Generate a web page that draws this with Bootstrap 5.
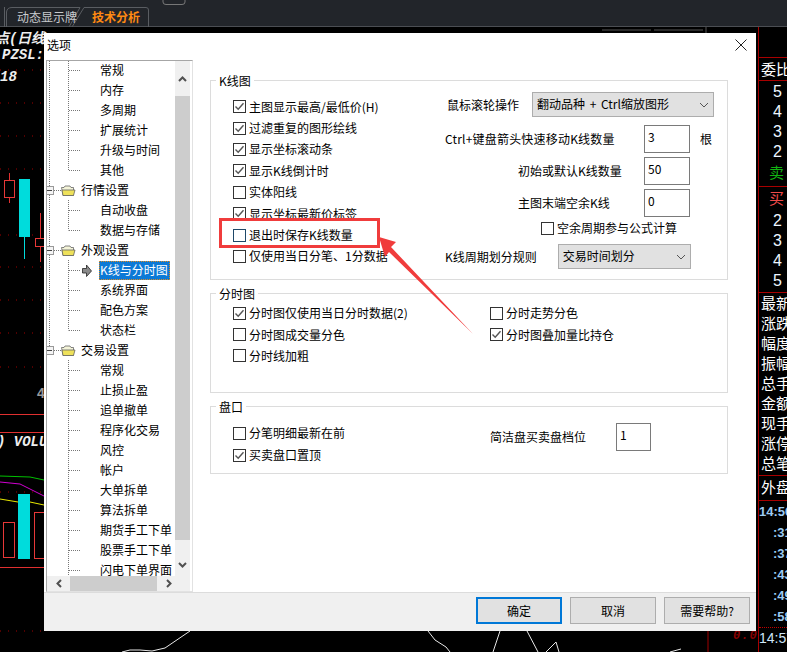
<!DOCTYPE html>
<html lang="zh-CN">
<head>
<meta charset="utf-8">
<title>选项</title>
<link rel="stylesheet" href="https://cdn.jsdelivr.net/npm/bootstrap@5.3.0/dist/css/bootstrap.min.css">
<style>
html,body{margin:0;background:#000;}
body{width:787px;height:652px;overflow:hidden;position:relative;font-family:"Noto Sans CJK SC","Noto Sans",sans-serif;font-size:12px;line-height:14px;color:#000;}
.screen{width:787px;height:652px;background:#000;}
.topbar{height:27px;background:#22252a;position:relative;border-bottom:1px solid #4b4e53;}
.tabs-art{position:absolute;left:0;top:0;}
.tabx{position:absolute;top:9px;line-height:16px;font-size:12px;}
.tabx-a{left:17px;color:#c9cbce;}
.tabx-b{left:92px;color:#ff8a12;font-weight:700;}
.chartwrap{width:758px;height:625px;}
.chartwrap svg{display:block;}
.ital{font-family:"Liberation Mono",monospace;font-style:italic;font-weight:700;font-size:14px;fill:#eee;}
.side{width:29px;height:625px;border-left:1px solid #a80000;overflow:hidden;color:#fff;white-space:nowrap;}
.s-head{height:31px;border-bottom:1px solid #a80000;}
.s-bid{height:23px;border-bottom:1px solid #a80000;font-size:15px;line-height:22px;padding-left:2px;}
.s-five{height:106px;border-bottom:1px solid #a80000;padding-top:1px;}
.s-five2{height:106px;border-bottom:1px solid #a80000;padding-top:1px;}
.s-d{height:20px;line-height:20px;font-family:"Liberation Sans",sans-serif;font-size:16px;padding-left:14px;color:#eef6ff;}
.s-d.mb3x{margin-bottom:3px;}
.s-sell{color:#12b312;font-family:"Noto Sans CJK SC",sans-serif;font-size:15px;padding-left:10px;}
.s-buy{color:#f04a4a;font-family:"Noto Sans CJK SC",sans-serif;font-size:15px;padding-left:10px;}
.s-lbls{height:183px;border-bottom:1px solid #a80000;font-size:15px;}
.s-l{height:20px;line-height:20px;padding-left:2px;}
.s-out{height:25px;border-bottom:1px solid #a80000;font-size:15px;line-height:22px;padding-left:2px;}
.s-t{height:21px;line-height:21px;font-family:"Liberation Sans",sans-serif;font-weight:700;font-size:13px;color:#9ccbf2;padding-left:14px;}
.s-t.whole{padding-left:0;}
.s-t.dotline{border-top:1px dotted #c00000;color:#cfe6fa;font-weight:400;font-size:14px;}
.dlg{position:absolute;left:44px;top:33px;width:712px;height:598px;background:#fff;display:flex;flex-direction:column;}
.dlg-title{height:27px;padding:0 0 3px 3px;line-height:24px;flex:none;}
.dlg-close{width:12px;height:12px;margin-right:9px;display:block;}
.dlg-body{height:532px;flex:none;}
.leftpane{width:151px;flex:none;background:#fff;}
.treebox{width:147px;height:532px;margin-left:2px;border:1px solid #e2e2e2;border-top:1px solid #a6a6a6;border-left:1px solid #a6a6a6;}
.treeinner{width:128px;height:515px;overflow:hidden;position:relative;flex:none;}
.treelines{position:absolute;left:0;top:0;}
.tr-root,.tr-kid{height:20px;line-height:20px;white-space:nowrap;position:relative;}
.tr-list{margin-top:-1px;}
.tr-root{padding-left:34px;}
.tr-kid{padding-left:53px;}
.tr-sel{display:inline-block;height:19px;line-height:17px;margin-left:-1px;padding:0 2px 0 1px;background:#0c79d6;color:#fff;outline:1px dotted #e08a1e;outline-offset:-1px;vertical-align:top;margin-top:1px;}
.vbar{width:15px;height:515px;background:#f0f0f0;flex:none;}
.vbar-btn{height:35px;}
.vbar-end{height:36px;}
.vbar-thumb{height:444px;background:#cdcdcd;}
.hbar{height:15px;width:143px;background:#f0f0f0;}
.hbar-btn{width:23px;flex:none;}
.hbar-thumb{width:87px;flex:none;height:15px;background:#cdcdcd;}
.rightpane{flex:1 1 auto;padding:20px 28px 0 15px;background:#fff;}
.grp{border:1px solid #dcdcdc;position:relative;}
.grp-1{height:200px;}
.grp-2{height:100px;margin-top:13px;}
.grp-3{height:68px;margin-top:13px;}
.grp-cap{display:table;background:#fff;margin:-7px 0 0 5px;padding:0 3px;height:14px;line-height:14px;}
.ckcol{padding-left:22px;flex:none;}
.col1w{width:234px;padding-top:8px;}
.col2w{width:257px;}
.ckrow{height:21.4px;display:flex;align-items:center;gap:3px;white-space:nowrap;}
.ckbox.form-check-input{width:13px;height:13px;margin:0;border:1px solid #333;border-radius:0;flex:none;background-color:#fff;background-size:13px 13px;box-shadow:none;float:none;}
.ckbox.form-check-input:checked{background-color:#fff;border-color:#333;background-image:url("data:image/svg+xml,%3csvg xmlns='http://www.w3.org/2000/svg' viewBox='0 0 13 13'%3e%3cpath fill='none' stroke='%23555' stroke-width='1.4' d='M2.5 6.5 5.2 9.2 10.5 3.2'/%3e%3c/svg%3e");}
.ckbox.hot{border-color:#1f4868;}
.g1right{width:270px;flex:none;margin-top:4px;}
.r-a{height:25px;margin-bottom:8px;}
.lblx{white-space:nowrap;}
.lbl-first{padding-left:2px;}
.ctlsel.form-select{font-size:12px;line-height:14px;height:25px;min-height:0;padding:0 0 2px 4px;border:1px solid #adadad;border-radius:0;background-color:#e1e1e1;color:#000;box-shadow:none;background-size:10px 6px;background-position:right 4px center;background-image:url("data:image/svg+xml,%3csvg xmlns='http://www.w3.org/2000/svg' viewBox='0 0 10 6'%3e%3cpath fill='none' stroke='%23555' d='M1 1 5 5 9 1'/%3e%3c/svg%3e");}
.sel-wide{width:182px;margin-left:13px;word-spacing:2px;}
.sel-narrow{width:133px;margin-left:21px;}
.ctlnum.form-control{width:46px;height:28px;min-height:0;font-size:12px;line-height:14px;border:1px solid #7a7a7a;border-radius:0;padding:0 3px 5px;box-shadow:none;color:#000;}
.r-n{height:28px;margin-bottom:4px;}
.lbl-pad{width:73px;flex:none;}
.lbl-w{width:126px;flex:none;white-space:nowrap;}
.lbl-w0{width:199px;flex:none;white-space:nowrap;letter-spacing:.2px;}
.gen{margin-left:10px;}
.r-ck{height:18px;padding-left:96px;margin:-2px 0 7px;}
.g2body{padding-top:1.500px;}
.g3body{padding-top:8px;}
.g3body .ckrow{height:22px;}
.g3r{align-self:flex-start;margin-top:1px;}
.g3lbl{width:126px;flex:none;}
.ctlnum.w35{width:35px;}
.dlg-foot{height:39px;flex:none;background:#f0f0f0;border-top:1px solid #dcdcdc;padding:4px 6px 0 0;}
.bt-x.btn{width:86px;height:27px;padding:0;font-size:12px;line-height:14px;border-radius:0;background:#e1e1e1;border:1px solid #adadad;color:#000;}
.bt-x.bt-pri.btn{border:2px solid #0078d7;}
.redbox{position:absolute;left:219px;top:218px;width:161px;height:30px;border:3px solid #f03c3c;}
.redarrow{position:absolute;left:370px;top:230px;}
</style>
</head>
<body>
<div class="screen d-flex flex-column">
  <div class="topbar">
    <svg class="tabs-art" width="300" height="27" fill="none" stroke="#5a5d62">
      <path d="M4.500 7V27"/>
      <path d="M6.500 27V12Q7 7.500 12 7.500H80L69 27"/>
      <path d="M72 27 84 7.500H146Q148.500 7.500 148.500 10V27"/>
      <path d="M163 0V2Q163 4.500 166 4.500H182Q185 4.500 185 2V0" stroke="#777"/>
    </svg>
    <span class="tabx tabx-a">动态显示牌</span>
    <span class="tabx tabx-b">技术分析</span>
  </div>
  <div class="d-flex">
    <div class="chartwrap">
      <svg width="758" height="625" viewBox="0 27 758 625">
        <rect x="0" y="27" width="758" height="625" fill="#000"/>
        <g stroke="#a00000" stroke-dasharray="1 7" fill="none">
          <path d="M0 70H44M0 103H44M0 136H44M0 169H44M0 235H44M0 267H44M0 300H44M0 333H44M0 367H44M0 492H44M0 631H44"/>
        </g>
        <text class="ital" x="-5" y="43">点(日线</text>
        <text class="ital" x="2" y="59">PZSL:</text>
        <text class="ital" x="0" y="81">18</text>
        <text class="ital" x="-3" y="446">) VOLU</text>
        <text x="37" y="398" font-family="Liberation Sans" font-weight="700" font-size="14" fill="#999">4</text>
        <path d="M9.500 173V203M40.500 213V262M0 414.500H44M0 432.500H44M0 567.500H44" stroke="#e03030" fill="none"/>
        <rect x="4.500" y="180.500" width="10" height="17" fill="#000" stroke="#e83838"/>
        <rect x="35.500" y="238.500" width="10" height="8" fill="#000" stroke="#e83838"/>
        <rect x="19" y="179" width="11" height="58" fill="#00dcdc"/>
        <path d="M24.500 237V259" stroke="#00dcdc"/>
        <polyline points="0,476 30,477 44,480" fill="none" stroke="#00c000"/>
        <polyline points="0,482 20,484 32,490 44,496" fill="none" stroke="#d000d0"/>
        <polyline points="0,499 18,502 30,502 44,505" fill="none" stroke="#e8e800"/>
        <rect x="3.500" y="522.500" width="11" height="35" fill="#000" stroke="#e83838"/>
        <rect x="18" y="494" width="12" height="65" fill="#00dcdc"/>
        <rect x="34.500" y="512.500" width="11" height="46" fill="#000" stroke="#e83838"/>
        <g fill="none" stroke="#e8e8e8">
          <polyline points="190,631 165,648 152,651 140,650 130,650 122,652"/>
          <polyline points="428,631 435,640 446,647 450,652"/>
          <polyline points="500,631 493,652"/>
          <polyline points="527,631 538,652"/>
          <polyline points="546,652 556,642 559,652"/>
          <polyline points="670,652 681,649"/>
        </g>
        <path d="M708 631V652" stroke="#a00000"/>
        <text x="733" y="639" font-family="Liberation Mono" font-style="italic" font-weight="700" font-size="12" letter-spacing="1" fill="#8a0000">0.0</text>
        <path d="M602 30H651M654 30H703M706 27V33" stroke="#555" fill="none"/>
      </svg>
    </div>
    <div class="side">
      <div class="s-head"></div>
      <div class="s-bid">委比</div>
      <div class="s-five">
        <div class="s-d">5</div><div class="s-d">4</div><div class="s-d">3</div><div class="s-d">2</div><div class="s-d s-sell">卖</div>
      </div>
      <div class="s-five2">
        <div class="s-d s-buy mb3x">买</div><div class="s-d">2</div><div class="s-d">3</div><div class="s-d">4</div><div class="s-d">5</div>
      </div>
      <div class="s-lbls">
        <div class="s-l">最新</div><div class="s-l">涨跌</div><div class="s-l">幅度</div><div class="s-l">振幅</div><div class="s-l">总手</div><div class="s-l">金额</div><div class="s-l">现手</div><div class="s-l">涨停</div><div class="s-l">总笔</div>
      </div>
      <div class="s-out">外盘</div>
      <div class="s-t whole">14:56</div>
      <div class="s-t">:31</div>
      <div class="s-t">:37</div>
      <div class="s-t">:43</div>
      <div class="s-t">:49</div>
      <div class="s-t">:58</div>
      <div class="s-t whole dotline">14:57</div>
    </div>
  </div>
</div>

<div class="dlg">
  <div class="dlg-title d-flex justify-content-between align-items-center">
    <span>选项</span>
    <svg class="dlg-close" viewBox="0 0 12 12"><path d="M.5 .5 11.500 11.500M11.500 .5 .5 11.500" stroke="#222" fill="none"/></svg>
  </div>
  <div class="dlg-body d-flex">
    <div class="leftpane">
      <div class="treebox">
        <div class="d-flex">
          <div class="treeinner">
            <svg class="treelines" width="128" height="515" viewBox="47 61 128 515">
              <g stroke="#777" stroke-dasharray="1 1" fill="none">
                <path d="M49.500 61V350M68.500 61V170.500M68.500 200V230.500M68.500 260V330.500M68.500 360V576"/>
                <path d="M69 70.500H80M69 90.500H80M69 110.500H80M69 130.500H80M69 150.500H80M69 170.500H80M69 210.500H80M69 230.500H80M69 270.500H81M69 290.500H80M69 310.500H80M69 330.500H80M69 370.500H80M69 390.500H80M69 410.500H80M69 430.500H80M69 450.500H80M69 470.500H80M69 490.500H80M69 510.500H80M69 530.500H80M69 550.500H80M69 570.500H80"/>
                <path d="M54 190.500H61M54 250.500H61M54 350.500H61"/>
              </g>
              <g>
                <g fill="#f4f4f4" stroke="#999">
                  <rect x="46.500" y="186.500" width="7" height="8"/><rect x="46.500" y="246.500" width="7" height="8"/><rect x="46.500" y="346.500" width="7" height="8"/>
                </g>
                <path d="M47 190.500H52M47 250.500H52M47 350.500H52" stroke="#444"/>
                <g stroke="#666" stroke-width=".8">
                  <path d="M61.500 187.500H64L65 186H70L71 187.500H73.500V195.500H63Z" fill="#f4f4d8"/><path d="M62 190H75L73.500 195.500H63Z" fill="#eee15a"/>
                  <path d="M61.500 247.500H64L65 246H70L71 247.500H73.500V255.500H63Z" fill="#f4f4d8"/><path d="M62 250H75L73.500 255.500H63Z" fill="#eee15a"/>
                  <path d="M61.500 347.500H64L65 346H70L71 347.500H73.500V355.500H63Z" fill="#f4f4d8"/><path d="M62 350H75L73.500 355.500H63Z" fill="#eee15a"/>
                </g>
              </g>
              <path d="M82.500 268.500H86.500V265L91.500 271 86.500 276.500V273H82.500Z" fill="#8a8a8a" stroke="#222" stroke-width=".8"/>
            </svg>
            <div class="tr-list position-relative">
              <div class="tr-kid">常规</div>
              <div class="tr-kid">内存</div>
              <div class="tr-kid">多周期</div>
              <div class="tr-kid">扩展统计</div>
              <div class="tr-kid">升级与时间</div>
              <div class="tr-kid">其他</div>
              <div class="tr-root">行情设置</div>
              <div class="tr-kid">自动收盘</div>
              <div class="tr-kid">数据与存储</div>
              <div class="tr-root">外观设置</div>
              <div class="tr-kid"><span class="tr-sel">K线与分时图</span></div>
              <div class="tr-kid">系统界面</div>
              <div class="tr-kid">配色方案</div>
              <div class="tr-kid">状态栏</div>
              <div class="tr-root">交易设置</div>
              <div class="tr-kid">常规</div>
              <div class="tr-kid">止损止盈</div>
              <div class="tr-kid">追单撤单</div>
              <div class="tr-kid">程序化交易</div>
              <div class="tr-kid">风控</div>
              <div class="tr-kid">帐户</div>
              <div class="tr-kid">大单拆单</div>
              <div class="tr-kid">算法拆单</div>
              <div class="tr-kid">期货手工下单</div>
              <div class="tr-kid">股票手工下单</div>
              <div class="tr-kid">闪电下单界面</div>
            </div>
          </div>
          <div class="vbar">
            <div class="vbar-btn d-flex justify-content-center align-items-center"><svg width="9" height="6" viewBox="0 0 9 6"><path d="M1 5 4.500 1.500 8 5" fill="none" stroke="#505050" stroke-width="2"/></svg></div>
            <div class="vbar-thumb"></div>
            <div class="vbar-end d-flex justify-content-center align-items-end pb-1"><svg width="9" height="6" viewBox="0 0 9 6" class="mb-1"><path d="M1 1 4.500 4.500 8 1" fill="none" stroke="#505050" stroke-width="2"/></svg></div>
          </div>
        </div>
        <div class="hbar d-flex align-items-center">
          <div class="hbar-btn d-flex justify-content-center"><svg width="6" height="9" viewBox="0 0 6 9"><path d="M5 1 1.500 4.500 5 8" fill="none" stroke="#505050" stroke-width="2"/></svg></div>
          <div class="hbar-thumb"></div>
          <div class="hbar-btn d-flex justify-content-center"><svg width="6" height="9" viewBox="0 0 6 9"><path d="M1 1 4.500 4.500 1 8" fill="none" stroke="#505050" stroke-width="2"/></svg></div>
        </div>
      </div>
    </div>
    <div class="rightpane">
      <div class="grp grp-1">
        <span class="grp-cap">K线图</span>
        <div class="d-flex">
          <div class="ckcol col1w">
            <label class="ckrow"><input class="ckbox form-check-input" type="checkbox" checked><span>主图显示最高/最低价(H)</span></label>
            <label class="ckrow"><input class="ckbox form-check-input" type="checkbox" checked><span>过滤重复的图形绘线</span></label>
            <label class="ckrow"><input class="ckbox form-check-input" type="checkbox" checked><span>显示坐标滚动条</span></label>
            <label class="ckrow"><input class="ckbox form-check-input" type="checkbox" checked><span>显示K线倒计时</span></label>
            <label class="ckrow"><input class="ckbox form-check-input" type="checkbox"><span>实体阳线</span></label>
            <label class="ckrow"><input class="ckbox form-check-input" type="checkbox" checked><span>显示坐标最新价标签</span></label>
            <label class="ckrow"><input class="ckbox hot form-check-input" type="checkbox"><span>退出时保存K线数量</span></label>
            <label class="ckrow"><input class="ckbox form-check-input" type="checkbox"><span>仅使用当日分笔、1分数据</span></label>
          </div>
          <div class="g1right">
            <div class="r-a d-flex align-items-center">
              <span class="lblx lbl-first">鼠标滚轮操作</span>
              <select class="ctlsel form-select sel-wide"><option>翻动品种 + Ctrl缩放图形</option></select>
            </div>
            <div class="r-n d-flex align-items-center">
              <span class="lbl-w0">Ctrl+键盘箭头快速移动K线数量</span>
              <input class="ctlnum form-control" type="text" value="3">
              <span class="gen">根</span>
            </div>
            <div class="r-n d-flex align-items-center">
              <span class="lbl-pad"></span><span class="lbl-w">初始或默认K线数量</span>
              <input class="ctlnum form-control" type="text" value="50">
            </div>
            <div class="r-n d-flex align-items-center">
              <span class="lbl-pad"></span><span class="lbl-w">主图末端空余K线</span>
              <input class="ctlnum form-control" type="text" value="0">
            </div>
            <label class="ckrow r-ck"><input class="ckbox form-check-input" type="checkbox"><span>空余周期参与公式计算</span></label>
            <div class="d-flex align-items-center">
              <span class="lblx">K线周期划分规则</span>
              <select class="ctlsel form-select sel-narrow"><option>交易时间划分</option></select>
            </div>
          </div>
        </div>
      </div>
      <div class="grp grp-2">
        <span class="grp-cap">分时图</span>
        <div class="d-flex g2body">
          <div class="ckcol col2w">
            <label class="ckrow"><input class="ckbox form-check-input" type="checkbox" checked><span>分时图仅使用当日分时数据(2)</span></label>
            <label class="ckrow"><input class="ckbox form-check-input" type="checkbox"><span>分时图成交量分色</span></label>
            <label class="ckrow"><input class="ckbox form-check-input" type="checkbox"><span>分时线加粗</span></label>
          </div>
          <div class="ckcol">
            <label class="ckrow"><input class="ckbox form-check-input" type="checkbox"><span>分时走势分色</span></label>
            <label class="ckrow"><input class="ckbox form-check-input" type="checkbox" checked><span>分时图叠加量比持仓</span></label>
          </div>
        </div>
      </div>
      <div class="grp grp-3">
        <span class="grp-cap">盘口</span>
        <div class="d-flex g3body">
          <div class="ckcol col2w">
            <label class="ckrow"><input class="ckbox form-check-input" type="checkbox"><span>分笔明细最新在前</span></label>
            <label class="ckrow"><input class="ckbox form-check-input" type="checkbox" checked><span>买卖盘口置顶</span></label>
          </div>
          <div class="ckcol d-flex align-items-center g3r">
            <span class="g3lbl">简洁盘买卖盘档位</span>
            <input class="ctlnum w35 form-control" type="text" value="1">
          </div>
        </div>
      </div>
    </div>
  </div>
  <div class="dlg-foot d-flex justify-content-end gap-2">
    <button class="bt-x bt-pri btn" type="button">确定</button>
    <button class="bt-x btn" type="button">取消</button>
    <button class="bt-x btn" type="button">需要帮助?</button>
  </div>
</div>

<div class="redbox"></div>
<svg class="redarrow" width="110" height="110" viewBox="370 230 110 110">
  <polygon points="379,237 396,242 391,247 473,334 389,252 385,257" fill="#f03c3c"/>
</svg>
</body>
</html>
